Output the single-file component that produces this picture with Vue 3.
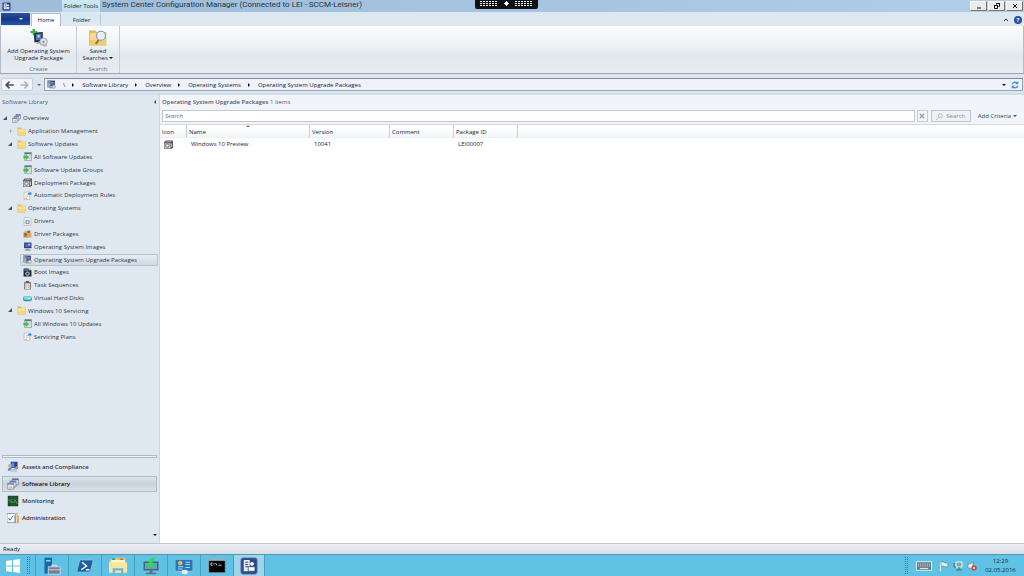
<script setup>
import { ref } from 'vue'

const query = ref('')
const address = ['Software Library', 'Overview', 'Operating Systems', 'Operating System Upgrade Packages']

const tree = [
  { label: 'Overview', icon: 'overview', level: 0, arrow: 'open' },
  { label: 'Application Management', icon: 'folder', level: 1, arrow: 'closed' },
  { label: 'Software Updates', icon: 'folder', level: 1, arrow: 'open' },
  { label: 'All Software Updates', icon: 'update', level: 2 },
  { label: 'Software Update Groups', icon: 'update', level: 2 },
  { label: 'Deployment Packages', icon: 'package', level: 2 },
  { label: 'Automatic Deployment Rules', icon: 'rule', level: 2 },
  { label: 'Operating Systems', icon: 'folder', level: 1, arrow: 'open' },
  { label: 'Drivers', icon: 'driver', level: 2 },
  { label: 'Driver Packages', icon: 'driverpack', level: 2 },
  { label: 'Operating System Images', icon: 'osimage', level: 2 },
  { label: 'Operating System Upgrade Packages', icon: 'upgrade', level: 2, selected: true },
  { label: 'Boot Images', icon: 'boot', level: 2 },
  { label: 'Task Sequences', icon: 'task', level: 2 },
  { label: 'Virtual Hard Disks', icon: 'disk', level: 2 },
  { label: 'Windows 10 Servicing', icon: 'folder', level: 1, arrow: 'open' },
  { label: 'All Windows 10 Updates', icon: 'update', level: 2 },
  { label: 'Servicing Plans', icon: 'rule', level: 2 },
]

const workspaces = [
  { label: 'Assets and Compliance', icon: 'assets' },
  { label: 'Software Library', icon: 'overview', selected: true },
  { label: 'Monitoring', icon: 'monitoring' },
  { label: 'Administration', icon: 'admin' },
]

const apps = [
  { label: 'Server Manager', icon: 'server' },
  { label: 'PowerShell', icon: 'powershell' },
  { label: 'File Explorer', icon: 'explorer' },
  { label: 'Remote Control', icon: 'remote' },
  { label: 'Control Panel', icon: 'panel' },
  { label: 'Command Prompt', icon: 'cmd' },
  { label: 'Configuration Manager', icon: 'sccm', active: true },
]
</script>

<template>
  <svg class="sprite" aria-hidden="true">
    <symbol id="folder" viewBox="0 0 16 16">
      <path d="M1 1h6l1 2h7v12H1z" fill="#e2b85a" /><path d="M2 4h12v10H2z" fill="#fbe29a" /><path d="M2 9h12v5H2z" fill="#f7d57a" />
    </symbol>
    <symbol id="overview" viewBox="0 0 16 16">
      <path d="M7 1h8v8H7z" fill="#e9edf6" stroke="#6a7496" /><path d="M7 1h8v2H7z" fill="#5b6aa6" />
      <path d="M4 4h8v8H4z" fill="#e2e7f2" stroke="#6a7496" /><path d="M4 4h8v2H4z" fill="#6a79b0" />
      <path d="M1 7h8v8H1z" fill="#f3f0ea" stroke="#777f9a" /><path d="M1 7h8v2H1z" fill="#7a88b8" /><path d="M3 11h4v3H3z" fill="#c9b9a0" />
    </symbol>
    <symbol id="update" viewBox="0 0 16 16">
      <path d="M3 1h12v14H3z" fill="#eef3f5" stroke="#6b7b86" /><path d="M3 1h12v3H3z" fill="#637789" /><path d="M10 6h4M11 9h3M10 12h4" stroke="#96a6b2" />
      <path d="M1 7h4V4l6 5-6 5v-3H1z" fill="#45bd48" stroke="#4fae55" stroke-width=".5" />
    </symbol>
    <symbol id="package" viewBox="0 0 16 16">
      <path d="M0 4l3-3h13v12l-3 3H0z" fill="#56575e" /><path d="M1 6h10v9H1z" fill="#f2efe8" /><path d="M4 2h10l-2 2H2z" fill="#a9a49a" />
      <circle cx="6" cy="10" r="3.500" fill="#b9bdc4" stroke="#484b52" /><circle cx="6" cy="10" r="1.200" fill="#fff" /><path d="M12 6h2v7h-2z" fill="#d0cbc0" />
    </symbol>
    <symbol id="rule" viewBox="0 0 16 16">
      <path d="M2 2h10v13H2z" fill="#fffdf6" stroke="#a5a39b" /><path d="M4 7h4M4 10h6" stroke="#b9b6ac" /><path d="M4 12h3v2H4z" fill="#e2b35c" />
      <path d="M8 8c0-4 1-5 4-5V1l4 4-4 3V6c-2 0-3 0-4 2z" fill="#3d93d6" />
    </symbol>
    <symbol id="driver" viewBox="0 0 16 16">
      <path d="M2 1h9l3 3v11H2z" fill="#fbfbfb" stroke="#9aa1aa" /><path d="M5 6h6v6H5z" fill="#9fb0c4" stroke="#68788a" /><circle cx="8" cy="9" r="1.500" fill="#fff" />
    </symbol>
    <symbol id="driverpack" viewBox="0 0 16 16">
      <path d="M1 6h9v9H1z" fill="#b58542" /><path d="M1 6l2-3h8l-1 3z" fill="#dfb978" /><path d="M7 7h8v8H7z" fill="#d5ab64" /><path d="M8 3h5v4H8z" fill="#7a6d5e" /><path d="M3 8h3v3H3z" fill="#6b4d25" />
    </symbol>
    <symbol id="osimage" viewBox="0 0 16 16">
      <path d="M2 1h13v10H2z" fill="#293a78" /><path d="M4 3h9v6H4z" fill="#4c6cc4" /><path d="M9 3h4v3H9z" fill="#a6c4ee" /><path d="M5 12h6v2H5z" fill="#8d96a7" /><path d="M3 14h11v1H3z" fill="#566176" />
    </symbol>
    <symbol id="upgrade" viewBox="0 0 16 16">
      <path d="M5 1h9v10H5z" fill="#34436f" /><path d="M7 3h5v5H7z" fill="#6282c9" /><path d="M1 1h5v12H1z" fill="#a9b2c2" stroke="#6f7b90" /><path d="M2 3h3M2 5h3" stroke="#56637a" /><circle cx="12" cy="12" r="3" fill="#d5dae0" stroke="#858d99" /><path d="M5 12h5v3H5z" fill="#8c96a4" />
    </symbol>
    <symbol id="boot" viewBox="0 0 16 16">
      <path d="M1 1h9v3h5v11H1z" fill="#20242e" /><path d="M2 2h7v3H2z" fill="#4b6fc0" /><circle cx="8" cy="10" r="3.500" fill="#7789a0" stroke="#d7dce3" /><circle cx="8" cy="10" r="1.400" fill="#222" /><path d="M11 2h3v2h-3z" fill="#8a94a4" />
    </symbol>
    <symbol id="task" viewBox="0 0 16 16">
      <path d="M2 2h12v13H2z" fill="#8c6a4a" /><path d="M4 4h8v10H4z" fill="#fff" /><path d="M5 0h6v4H5z" fill="#596171" /><path d="M5 7h2M5 9h2M5 12h2M8 7h3M8 9h3M8 12h3" stroke="#496a9d" />
    </symbol>
    <symbol id="disk" viewBox="0 0 16 16">
      <rect x="0" y="4" width="16" height="9" rx="4" fill="#2a98a8" /><rect x="1" y="4" width="14" height="6" rx="3" fill="#7bdde0" /><path d="M9 7h4v2H9z" fill="#effcfc" />
    </symbol>
    <symbol id="assets" viewBox="0 0 16 16">
      <path d="M5 1h9v8H5z" fill="#1f3d99" /><path d="M6 2h4v6H6z" fill="#4f86e6" /><path d="M9 10h4v2H9z" fill="#8993a3" /><circle cx="4" cy="6" r="2.500" fill="#d9a877" /><path d="M1 13c0-6 6-6 6 0z" fill="#5b8fc8" /><path d="M5 11h8v4H5z" fill="#b9c9df" /><circle cx="13" cy="9" r="2" fill="#c48c5d" />
    </symbol>
    <symbol id="monitoring" viewBox="0 0 16 16">
      <path d="M1 1h14v14H1z" fill="#1c4a2b" /><path d="M2 6h12M2 10h12M6 2v12M10 2v12" stroke="#3a7a49" stroke-width=".7" /><path d="M2 7l3 1 3 2 3-3 3 5" fill="none" stroke="#48b05a" stroke-width="1.200" />
    </symbol>
    <symbol id="admin" viewBox="0 0 16 16">
      <path d="M0 2h11v12H0z" fill="#fcfdff" stroke="#7b8798" /><path d="M2 8l2 3 4-6" fill="none" stroke="#3b73bd" stroke-width="1.300" /><path d="M10 4h2v11h-2z" fill="#909bab" /><path d="M12 1h2v3l2 2v9h-3V6z" fill="#dcb067" />
    </symbol>
    <symbol id="add-package" viewBox="0 0 24 24">
      <path d="M5 5l12-1v12l-11 2z" fill="#222e45" /><path d="M8 7l7-1v8l-7 1z" fill="#4c79c8" /><path d="M10 8h3v3h-3z" fill="#c4dc82" /><path d="M9 18l7-2 2 2-9 2z" fill="#8d96a2" />
      <circle cx="18" cy="17" r="5" fill="#dfe3e8" stroke="#8b929c" /><circle cx="18" cy="17" r="1.500" fill="#8a9099" /><path d="M17 19l6 3-2 2-6-3z" fill="#b2b8c0" />
      <path d="M4 0h2v3h3v2H6v3H4V5H1V3h3z" fill="#3fc443" stroke="#178227" stroke-width=".7" />
    </symbol>
    <symbol id="saved-search" viewBox="0 0 24 24">
      <path d="M0 2h8l2 2h13v18H0z" fill="#e0b45a" /><path d="M1 5h21v16H1z" fill="#f8d98a" /><path d="M1 15h21v6H1z" fill="#f3c96f" />
      <path d="M14 13l-5 7" stroke="#8a7046" stroke-width="2.500" /><circle cx="16" cy="9" r="6" fill="#e5f1fa" stroke="#8798aa" stroke-width="1.500" />
    </symbol>
    <symbol id="server" viewBox="0 0 24 24">
      <path d="M2 1h10v21H2z" fill="#1b66a8" /><path d="M4 4h6v2H4z" fill="#9bd1f2" /><path d="M7 13h16v10H7z" fill="#748291" stroke="#dce6ed" /><path d="M12 13v-2h6v2" fill="none" stroke="#dce6ed" stroke-width="1.500" /><path d="M7 17h16" stroke="#dce6ed" />
    </symbol>
    <symbol id="powershell" viewBox="0 0 24 24">
      <path d="M5 4h18l-4 16H1z" fill="#1c5f9f" stroke="#8fc6e8" /><path d="M8 7l6 5-7 5M13 17h5" fill="none" stroke="#fff" stroke-width="2" />
    </symbol>
    <symbol id="explorer" viewBox="0 0 24 24">
      <path d="M1 3h6l2-2h13v20H1z" fill="#e3c66f" /><path d="M3 4h18v4H3z" fill="#fff6d0" /><path d="M4 2h4v2H4z" fill="#3fa756" /><path d="M15 2h4v2h-4z" fill="#d45b46" /><path d="M0 7h24v14H0z" fill="#f6e5a3" /><path d="M5 23v-8h14v8h-3v-5H8v5z" fill="#6cb5dc" />
    </symbol>
    <symbol id="remote" viewBox="0 0 24 24">
      <path d="M2 6h20v12H2z" fill="#4b6377" /><path d="M4 8h16v8H4z" fill="#62a1bf" /><path d="M10 18h4v3h5v2H5v-2h5z" fill="#5f7180" /><path d="M19 1c-6-1-9 2-10 7H5l6 7 6-7h-3c0-3 2-5 5-7z" fill="#2fdc49" />
    </symbol>
    <symbol id="panel" viewBox="0 0 24 24">
      <path d="M0 3h24v16H0z" fill="#2b77b5" stroke="#a5d2ec" /><circle cx="7" cy="8" r="3" fill="#e6b85a" /><path d="M4 13h7M4 16h6M14 7h6M14 10h6M14 14h6" stroke="#a9ddf5" stroke-width="1.500" /><ellipse cx="13" cy="20" rx="4" ry="3" fill="#eceff0" />
    </symbol>
    <symbol id="cmd" viewBox="0 0 24 24">
      <path d="M1 3h22v18H1z" fill="#050505" stroke="#98a5ab" /><path d="M1 3h22v2H1z" fill="#b8c2c6" /><path d="M6 8H4v3h2M8 8v1M8 10v1M10 8l2 3M14 11h4" stroke="#fff" fill="none" />
    </symbol>
    <symbol id="sccm" viewBox="0 0 24 24">
      <rect x="1" y="1" width="22" height="22" rx="3" fill="#2c4a8a" stroke="#7d94bd" /><path d="M5 4h8v15H5z" fill="#e9eef8" /><path d="M7 7h4M7 10h4M7 13h4" stroke="#25427f" stroke-width="1.300" /><circle cx="16" cy="9" r="2.500" fill="#fff" /><path d="M11 19v-6h9v6z" fill="#fff" stroke="#25427f" />
    </symbol>
    <symbol id="dots" viewBox="0 0 18 5">
      <path d="M0 .5h18M0 2.500h18M0 4.500h18" stroke="#f2f2f2" stroke-dasharray="2 1" />
    </symbol>
  </svg>

  <div class="window">
    <header class="titlebar">
      <svg class="app-icon"><use href="#sccm" /></svg>
      <span class="context">Folder Tools</span>
      <h1>System Center Configuration Manager (Connected to LEI - SCCM-Leisner)</h1>
      <div class="pin" aria-hidden="true">
        <svg class="dots"><use href="#dots" /></svg>
        <svg viewBox="0 0 5 5"><path d="M2 0h1v1h1v1h1v1H4v1H3v1H2V4H1V3H0V2h1V1h1z" fill="#fff" /></svg>
        <svg class="dots"><use href="#dots" /></svg>
      </div>
      <div class="controls">
        <button aria-label="Minimize"><svg viewBox="0 0 10 8"><path d="M3 6h4" /></svg></button>
        <button aria-label="Restore"><svg viewBox="0 0 10 8"><path d="M4.500 2.500v-1h3v3h-1M2.500 3.500h3v3h-3zM4 1.500h4M2 3.500h4" /></svg></button>
        <button aria-label="Close"><svg viewBox="0 0 10 8"><path d="M3 2l4 4M7 2L3 6" /></svg></button>
      </div>
    </header>

    <nav class="tabs">
      <button class="file" aria-label="Application menu"><b class="down"></b></button>
      <button class="tab current">Home</button>
      <button class="tab contextual">Folder</button>
      <span class="grow"></span>
      <button class="mini" aria-label="Collapse ribbon"><svg viewBox="0 0 8 8"><path d="M2 5l2-2 2 2" fill="none" stroke="#333" /></svg></button>
      <button class="help" aria-label="Help">?</button>
    </nav>

    <section class="ribbon">
      <div class="group create">
        <button><svg><use href="#add-package" /></svg><span>Add Operating System<br>Upgrade Package</span></button>
        <small>Create</small>
      </div>
      <div class="group saved">
        <button><svg><use href="#saved-search" /></svg><span>Saved<br>Searches <b class="down"></b></span></button>
        <small>Search</small>
      </div>
    </section>

    <nav class="address">
      <div class="history">
        <button aria-label="Back"><svg viewBox="0 0 12 12"><path d="M11 6H2M6 2L2 6l4 4" fill="none" stroke="#45505f" stroke-width="2" /></svg></button>
        <button aria-label="Forward"><svg viewBox="0 0 12 12"><path d="M1 6h9M6 2l4 4-4 4" fill="none" stroke="#a9b2bf" stroke-width="2" /></svg></button>
      </div>
      <button class="recent" aria-label="Recent locations"><b class="down"></b></button>
      <div class="path">
        <svg class="icon"><use href="#upgrade" /></svg>
        <span class="root">\</span>
        <template v-for="part in address" :key="part"><b class="right"></b><a href="#">{{ part }}</a></template>
        <span class="grow"></span>
        <button aria-label="Show locations"><b class="down"></b></button>
        <button aria-label="Refresh"><svg class="refresh" viewBox="0 0 12 12"><path d="M2 5c0-3 5-4 7-2M10 7c0 3-5 4-7 2" fill="none" stroke="#3a95c9" stroke-width="2" /><path d="M11 0v5H6zM1 12V7h5z" fill="#3a95c9" /></svg></button>
      </div>
    </nav>

    <main>
      <aside>
        <h2>Software Library <b class="left"></b></h2>
        <ul class="tree">
          <li v-for="item in tree" :key="item.label" :class="['level' + item.level, { selected: item.selected }]">
            <i :class="['twist', item.arrow]"></i>
            <a href="#"><svg class="icon"><use :href="'#' + item.icon" /></svg>{{ item.label }}</a>
          </li>
        </ul>
        <div class="splitter"></div>
        <nav class="workspaces">
          <a v-for="item in workspaces" :key="item.label" href="#" :class="{ selected: item.selected }">
            <svg><use :href="'#' + item.icon" /></svg>{{ item.label }}
          </a>
        </nav>
        <button class="more" aria-label="Configure buttons"><b class="down"></b></button>
      </aside>

      <section class="content">
        <h2><strong>Operating System Upgrade Packages</strong> 1 items</h2>
        <form class="search" @submit.prevent>
          <input v-model="query" type="text" placeholder="Search" aria-label="Search">
          <button type="button" class="clear" aria-label="Clear"><svg viewBox="0 0 8 8"><path d="M1 1l6 6M7 1L1 7" stroke="#999" stroke-width="1.500" /></svg></button>
          <button class="go"><svg viewBox="0 0 8 8"><circle cx="5" cy="3" r="2.300" fill="#f3f8fc" stroke="#a9b4c0" /><path d="M3 5L0 8" stroke="#a9b4c0" /></svg>Search</button>
          <button type="button" class="criteria">Add Criteria <b class="down"></b></button>
        </form>
        <table>
          <colgroup><col class="c-icon"><col class="c-name"><col class="c-version"><col class="c-small"><col class="c-small"><col></colgroup>
          <thead><tr><th>Icon</th><th class="sorted">Name<b class="up"></b></th><th>Version</th><th>Comment</th><th>Package ID</th><th></th></tr></thead>
          <tbody><tr><td><svg class="icon"><use href="#package" /></svg></td><td>Windows 10 Preview</td><td>10041</td><td></td><td>LEI00007</td><td></td></tr></tbody>
        </table>
      </section>
    </main>

    <footer class="status">Ready</footer>

    <footer class="taskbar">
      <button class="start" aria-label="Start"><svg viewBox="0 0 14 14"><path d="M0 2l6-1v5.500H0zM7 1l7-1v6.500H7zM0 7.500h6V13l-6-1zM7 7.500h7V14l-7-1z" fill="#fff" /></svg></button>
      <i class="grip"></i>
      <button v-for="app in apps" :key="app.label" class="app" :class="{ active: app.active }" :aria-label="app.label"><svg><use :href="'#' + app.icon" /></svg></button>
      <span class="grow"></span>
      <i class="grip"></i>
      <div class="tray">
        <svg class="keyboard" viewBox="0 0 17 10"><path d="M.5.5h16v9H.5z" fill="#58777f" stroke="#eef9fc" /><path d="M2 3h13M2 5h13" stroke="#fff" stroke-dasharray="1 1" /><path d="M4 7.500h9" stroke="#fff" /></svg>
        <svg viewBox="0 0 10 10"><path d="M1.500 1v9" stroke="#fff" /><path d="M2 1h3l1 1h3v4H6L5 5H2z" fill="#dff3f9" stroke="#527986" stroke-width=".6" /></svg>
        <svg viewBox="0 0 10 10"><path d="M3 1h6v5H3z" fill="#87a5ae" stroke="#eaf7fa" /><path d="M1 2v4h2M6 6v3M3 9h6" fill="none" stroke="#456875" /></svg>
        <svg viewBox="0 0 10 10"><path d="M1 3h2l3-2v8L3 7H1z" fill="#eef6f8" stroke="#57727b" stroke-width=".6" /><circle cx="7" cy="7" r="2.700" fill="#d84848" /><path d="M6 6l2 2M8 6L6 8" stroke="#fff" stroke-width=".7" /></svg>
      </div>
      <time>12:29<br>02.05.2016</time>
    </footer>
  </div>
</template>

<style>
body { margin: 0; background: #dfe8f0; }
</style>

<style scoped>
* { box-sizing: border-box; }
.sprite { position: absolute; width: 0; height: 0; }
.window { display: flex; flex-direction: column; min-height: 100vh; font: 6px/8px "Open Sans", "Noto Sans", sans-serif; color: #1c222a; background: #dfe8f0; }
button { padding: 0; border: 0; background: none; font: inherit; color: inherit; display: flex; align-items: center; justify-content: center; }
a { color: inherit; text-decoration: none; }
h1, h2, ul { margin: 0; padding: 0; font-weight: 400; }
svg { display: block; flex: none; }
.icon { width: 9px; height: 9px; }
.grow { flex: 1; }
.down, .up, .left, .right { display: inline-block; width: 0; height: 0; border: 2px solid transparent; flex: none; }
.down { border-top-color: #111; border-bottom-width: 0; }
.up { border-bottom-color: #777; border-top-width: 0; }
.right { border-left-color: #111; border-right-width: 0; }
.left { border-right-color: #445; border-left-width: 0; }

.titlebar { position: relative; display: flex; height: 12px; background: linear-gradient(90deg, #9fbdd9, #a6c3df 50%, #b2cfe9); }
.app-icon { width: 9px; height: 9px; margin: 2px 51px 0 2px; }
.context { width: 38px; height: 12px; line-height: 13px; text-align: center; background: linear-gradient(#cbe9f3, #bde0ee); white-space: nowrap; }
h1 { flex: 1; margin-left: 2px; font-family: Roboto, "Open Sans", sans-serif; font-size: 8px; line-height: 10px; white-space: nowrap; color: #263442; }
.pin { position: absolute; top: 0; left: 50%; margin-left: -37px; display: flex; align-items: center; justify-content: space-between; width: 63px; height: 9px; padding: 0 5px 2px; background: #101216; border-radius: 0 0 2px 2px; }
.pin svg { width: 5px; height: 5px; }
.pin .dots { width: 18px; }
.controls { display: flex; gap: 1px; height: 10px; margin: 1px 1px 0 0; }
.controls button { width: 17px; background: #edebe9; border: 1px solid #f8f8f8; border-right-color: #777; border-bottom-color: #777; }
.controls svg { width: 10px; height: 8px; fill: none; stroke: #111; }

.tabs { display: flex; height: 14px; margin-bottom: -1px; padding: 1px 1px 0; background: linear-gradient(#dce7f1, #dfe8f0); position: relative; }
.file { width: 29px; height: 12px; background: linear-gradient(#2b50a0, #173880 50%, #2355b4); padding-left: 10px; }
.file .down { border-top-color: #fff; }
.tab { height: 13px; border: 1px solid transparent; border-bottom: 0; }
.current { width: 30px; margin-left: 1px; background: #fafcfe; border-color: #b3bfcc; }
.contextual { width: 39px; height: 12px; margin-left: 1px; border-right-color: #b4cbd6; background: linear-gradient(#d3eaf3, #e0e9f1); }
.mini svg { width: 8px; height: 8px; }
.mini { margin-right: 4px; }
.help { align-self: center; width: 8px; height: 8px; margin-right: 1px; border-radius: 50%; background: #254fa0; color: #fff; font-weight: 700; }

.ribbon { display: flex; height: 49px; border: 1px solid #b2bbc7; border-bottom-color: #9da5b0; background: linear-gradient(#fafcfd, #eef2f6 40%, #e2e8ef 60%, #e7ecf2); }
.group { display: flex; flex-direction: column; align-items: center; justify-content: space-between; border-right: 1px solid #c5cdd7; }
.create { width: 76px; }
.saved { width: 43px; }
.group button { flex-direction: column; margin-top: 3px; }
.group button svg { width: 18px; height: 18px; margin-bottom: 1px; }
.group button span { line-height: 7px; text-align: center; white-space: nowrap; }
.group .down { vertical-align: 1px; }
small { font-size: 6px; color: #667180; }

.address { display: flex; align-items: center; height: 21px; padding: 2px 1px 0 1px; background: #dce5ee; border-bottom: 2px solid #d0dfe9; }
.history { display: flex; gap: 2px; height: 13px; padding: 0 1px; background: #f1f5f9; border: 1px solid #c5d0db; border-radius: 2px; }
.history svg { width: 11px; height: 10px; }
.history button { width: 13px; }
.recent { width: 11px; }
.recent .down { border-top-color: #667; }
.path { flex: 1; display: flex; align-items: center; height: 13px; padding: 0 3px 0 2px; background: #eef3fb; border: 1px solid #98a2b1; border-top-color: #7d8898; white-space: nowrap; }
.path .root { margin: 0 0 0 7px; }
.path .right { margin: 0 8px 0 7px; }
.path button + button { margin-left: 5px; }
.refresh { width: 8px; height: 8px; }

main { flex: 1; display: grid; grid-template-columns: 160px minmax(0, 1fr); }
aside { display: flex; flex-direction: column; background: #dfe8f1; border-right: 1px solid #ccd6e0; }
h2 { font-size: 6px; line-height: 14px; color: #4e5b6c; }
aside h2 { display: flex; align-items: center; justify-content: space-between; padding: 0 3px 3px 2px; height: 17px; }
.tree { display: grid; grid-auto-rows: 1fr; height: 231px; list-style: none; color: #2c3642; }
.tree li { display: flex; align-items: center; white-space: nowrap; }
.tree a { display: flex; align-items: center; gap: 2px; flex: 1; height: 12px; margin-right: 1px; padding-left: 2px; border: 1px solid transparent; }
.level0 { padding-left: 3px; }
.level1 { padding-left: 8px; }
.level2 { padding-left: 14px; }
.twist { width: 6px; height: 5px; }
.open::before { content: ""; display: block; width: 0; border-left: 4px solid transparent; border-bottom: 4px solid #4b535e; }
.closed::before { content: ""; display: block; width: 0; margin-left: 2px; border: 2px solid transparent; border-left-color: #a0a9b4; }
.tree .selected a { background: linear-gradient(#e7edf4, #cfd9e5); border-color: #b7c2d0; border-radius: 1px; }
.splitter { height: 3px; margin: auto 2px 1px; border: 1px solid #b0bac7; background: #edf2f7; }
.workspaces { display: flex; flex-direction: column; gap: 1px; padding: 0 2px; font-weight: 600; color: #2a323c; }
.workspaces a { display: flex; align-items: center; gap: 3px; height: 16px; padding-left: 4px; border: 1px solid transparent; }
.workspaces svg { width: 12px; height: 12px; }
.workspaces .selected { border-color: #b4bcc8; background: linear-gradient(#dde3eb, #c9d1dc 50%, #dbe1e9); color: #111; }
.more { align-self: flex-end; width: 8px; height: 17px; }

.content { background: #fff; }
.content h2 { height: 14px; padding-left: 2px; background: #f1f5fa; }
.content strong { font-weight: 600; }
.search { display: flex; height: 16px; padding: 1px 7px 2px 2px; background: #f1f5fa; border-bottom: 1px solid #d5d9de; }
.search input { flex: 1; min-width: 0; height: 12px; padding: 0 2px; border: 1px solid #c3c8cf; border-radius: 0; background: #fff; font: inherit; outline: 0; }
.search input::placeholder { color: #666; font-style: italic; opacity: 1; }
.search button { height: 12px; }
.clear { width: 11px; margin-left: 2px; border: 1px solid #c8ccd1; background: #f2f4f6; }
.clear svg { width: 6px; height: 6px; }
.go { width: 40px; margin: 0 7px 0 3px; gap: 3px; border: 1px solid #c0c5cb; background: #eff2f5; color: #858a91; }
.go svg { width: 7px; height: 7px; }
.criteria { gap: 2px; color: #24416f; }
.criteria .down { border-top-color: #456; }

table { width: 100%; table-layout: fixed; border-collapse: separate; border-spacing: 0; }
.c-icon { width: 27px; }
.c-name { width: 123px; }
.c-version { width: 80px; }
.c-small { width: 64px; }
th { position: relative; height: 13px; padding: 2px 0 0 2px; text-align: left; font-weight: 400; background: linear-gradient(#fff 20%, #f2f5f9); border-right: 1px solid #ccd0d6; border-bottom: 1px solid #edf0f4; }
th:last-child { border-right: 0; }
.up { position: absolute; top: 0; left: 50%; margin-left: -2px; }
td { height: 12px; padding: 0 0 0 4px; }

.status { height: 11px; padding: 1px 3px; background: linear-gradient(#edf0f4, #d9dfe7); border-top: 1px solid #bfc6cf; }
.taskbar { display: flex; align-items: stretch; height: 22px; background: #5fc1e3; border-top: 1px solid #4e98b4; color: #12303d; }
.start { width: 26px; }
.start svg { width: 14px; height: 14px; }
.grip { align-self: center; width: 5px; height: 17px; margin-right: 4px; background: conic-gradient(#2f7f9c 25%, transparent 0) 0 0 / 2px 2px; }
.app { width: 33px; border-left: 1px solid #4a9fbd; }
.app svg { width: 18px; height: 18px; }
.app.active { width: 32px; background: #9ed5eb; border-right: 1px solid #4a9fbd; }
.tray { display: flex; align-items: center; gap: 4px; }
.tray svg { width: 10px; height: 10px; }
.tray .keyboard { width: 16px; height: 10px; margin: 0 3px; }
time { align-self: center; width: 47px; text-align: center; line-height: 9px; }
</style>
